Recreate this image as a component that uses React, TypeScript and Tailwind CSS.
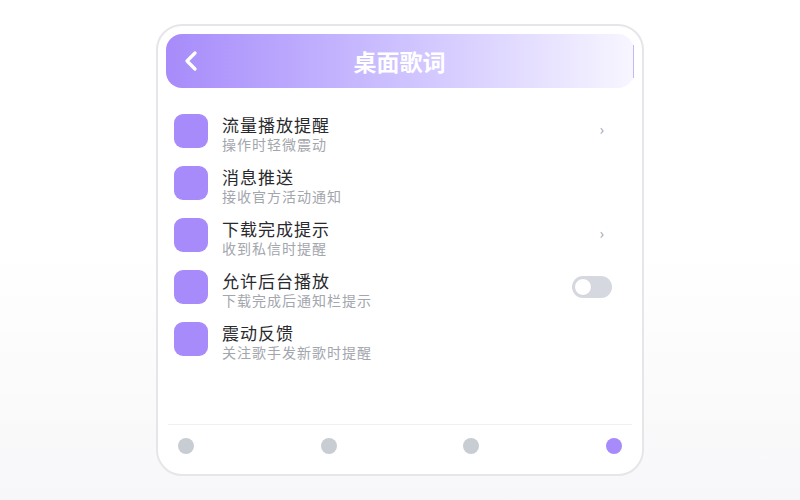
import { ChevronLeft } from 'lucide-react';

const rows = [
  { title: '流量播放提醒', desc: '操作时轻微震动', right: 'chevron' },
  { title: '消息推送', desc: '接收官方活动通知', right: '' },
  { title: '下载完成提示', desc: '收到私信时提醒', right: 'chevron' },
  { title: '允许后台播放', desc: '下载完成后通知栏提示', right: 'toggle' },
  { title: '震动反馈', desc: '关注歌手发新歌时提醒', right: '' },
];

const App = () => {
  return (
    <div
      className="w-[800px] h-[500px] flex items-center justify-center bg-linear-to-b from-white via-white to-[#f7f7f9]"
      style={{ fontFamily: '"Noto Sans CJK SC", "Noto Sans", sans-serif' }}
    >
      <div className="w-[488px] h-[452px] flex flex-col bg-white border-2 border-[#e6e6ea] rounded-[26px] px-2 pt-[8px] pb-2">
        {/* header */}
        <div className="h-[54px] flex items-center rounded-[16px] bg-linear-to-r from-[#a78bfa] to-[#f8f6ff]">
          <div className="flex-1 flex items-center pl-[9px]">
            <ChevronLeft size={32} strokeWidth={2.5} className="text-white" />
          </div>
          <h1 className="text-[23px] font-bold text-white mr-[10px]">桌面歌词</h1>
          <div className="flex-1 flex justify-end">
            <div className="w-px h-[33px] bg-[#c4b5fd]" />
          </div>
        </div>

        {/* list */}
        <div className="flex-1 flex flex-col mt-[17px]">
          {rows.map((row, i) => (
            <div key={i} className="h-[52px] flex items-center pl-2 pr-[22px]">
              <div className="w-[34px] h-[34px] rounded-[9px] bg-[#a78bfa] shrink-0" />
              <div className="flex-1 flex flex-col ml-[14px] pt-[4px]">
                <span className="text-[17px] leading-[21px] tracking-[1px] text-[#2a2a2e]">{row.title}</span>
                <span className="text-[14px] leading-[18px] tracking-[1px] text-[#a3a6ad]">{row.desc}</span>
              </div>
              {row.right === 'chevron' && (
                <span className="mr-[8px] -mt-[3px] text-[15px] text-[#9ca3af]">›</span>
              )}
              {row.right === 'toggle' && (
                <div className="w-[40px] h-[22px] rounded-full bg-[#d5d8de] flex items-center px-[2px]">
                  <div className="w-[18px] h-[18px] rounded-full bg-white border border-[#d1d5db]" />
                </div>
              )}
            </div>
          ))}
        </div>

        {/* bottom nav */}
        <div className="h-[42px] mx-[2px] border-t border-[#f0f0f2] flex items-center justify-between px-[10px]">
          <div className="w-4 h-4 rounded-full bg-[#c8ccd3]" />
          <div className="w-4 h-4 rounded-full bg-[#c8ccd3]" />
          <div className="w-4 h-4 rounded-full bg-[#c8ccd3]" />
          <div className="w-4 h-4 rounded-full bg-[#a78bfa]" />
        </div>
      </div>
    </div>
  );
};

export default App;
